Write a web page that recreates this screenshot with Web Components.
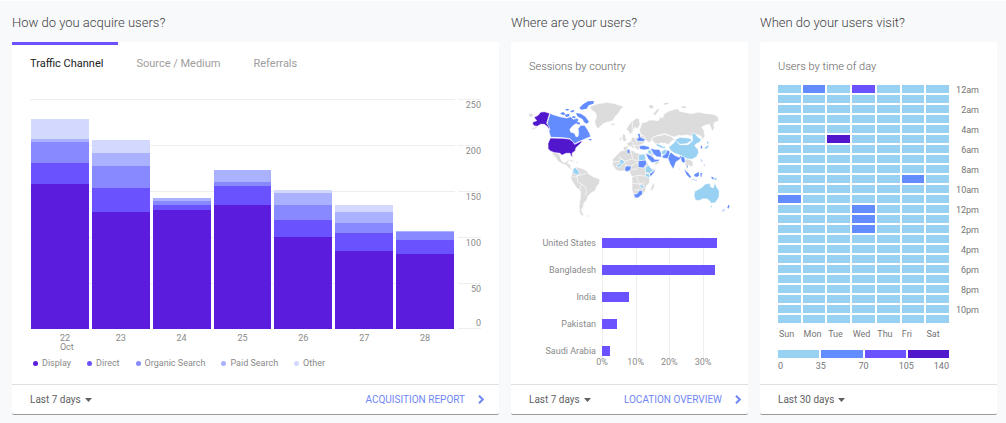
<!DOCTYPE html>
<html lang="en">
<head>
<meta charset="utf-8">
<title>Audience dashboard</title>
<style>
html { background: #f8f9fb; }
body {
  margin: 0;
  border-top: 1px solid #fff;
  font-family: Roboto, "Liberation Sans", sans-serif;
  color: #757575;
  --display: #5b1cdd;
  --direct: #6a52ff;
  --organic: #8888ff;
  --paid: #aab1ff;
  --other: #d3d8ff;
  --sky: #98d1f2;
  --blue: #638dff;
  --deep: #5117cd;
  --rule: #eeeeee;
  --link: #6f86f5;
  --text-s: 9px;
  --text-m: 10px;
  --text-l: 11px;
}
</style>
</head>
<body>
<audience-dashboard>
  <dash-panel heading="How do you acquire users?">
    <channel-tabs slot="top"></channel-tabs>
    <traffic-chart></traffic-chart>
    <panel-footer slot="footer" range="Last 7 days" report="Acquisition report"></panel-footer>
  </dash-panel>
  <dash-panel heading="Where are your users?">
    <panel-caption slot="top">Sessions by country</panel-caption>
    <country-map></country-map>
    <country-bars></country-bars>
    <panel-footer slot="footer" range="Last 7 days" report="Location overview" narrow></panel-footer>
  </dash-panel>
  <dash-panel heading="When do your users visit?">
    <panel-caption slot="top">Users by time of day</panel-caption>
    <hour-heatmap></hour-heatmap>
    <panel-footer slot="footer" range="Last 30 days"></panel-footer>
  </dash-panel>
</audience-dashboard>

<script>
class BaseElement extends HTMLElement {
  constructor() { super(); this.attachShadow({ mode: 'open' }); }
  connectedCallback() { this.shadowRoot.innerHTML = this.render(); }
}

customElements.define('audience-dashboard', class extends BaseElement {
  render() {
    return `<style>
      :host { display: grid; grid-template-columns: 487fr 237fr 237fr; gap: 12px; padding: 12px 9px 8px 12px; }
    </style><slot></slot>`;
  }
});

customElements.define('dash-panel', class extends BaseElement {
  render() {
    return `<style>
      :host { display: flex; flex-direction: column; min-width: 0; }
      h2 { margin: 0 0 9px; font-size: 13px; line-height: 20px; font-weight: 300; color: #424242; }
      article { flex: 1; display: flex; flex-direction: column; background: #fff; border-bottom: 1px solid #999; border-radius: 2px; }
      .body { flex: 1; padding: 0 18px 13px; }
    </style>
    <h2>${this.getAttribute('heading')}</h2>
    <article>
      <slot name="top"></slot>
      <div class="body"><slot></slot></div>
      <slot name="footer"></slot>
    </article>`;
  }
});

customElements.define('panel-caption', class extends BaseElement {
  render() {
    return `<style>
      :host { display: block; padding: 17px 18px 10px; font-size: var(--text-l); line-height: 16px; font-weight: 300; color: #616161; }
    </style><slot></slot>`;
  }
});

customElements.define('channel-tabs', class extends BaseElement {
  render() {
    return `<style>
      :host { display: block; }
      div { display: flex; }
      button { border: 0; border-top: 3px solid transparent; background: none; padding: 11px 15px 11px 18px; font: 400 var(--text-l)/16px Roboto, sans-serif; color: #9e9e9e; }
      button[aria-selected=true] { border-color: var(--direct); color: #212121; }
    </style>
    <div role="tablist">
      <button role="tab" aria-selected="true">Traffic Channel</button>
      <button role="tab" aria-selected="false">Source / Medium</button>
      <button role="tab" aria-selected="false">Referrals</button>
    </div>`;
  }
});

customElements.define('traffic-chart', class extends BaseElement {
  render() {
    const series = ['other', 'paid', 'organic', 'direct', 'display'];
    const days = [
      ['22<br>Oct', 21, 4, 23, 22, 158],
      ['23', 14, 14, 24, 26, 127],
      ['24', 0, 3, 4, 6, 129],
      ['25', 0, 13, 4, 21, 135],
      ['26', 3, 13, 16, 19, 100],
      ['27', 8, 12, 11, 19, 85],
      ['28', 0, 2, 8, 15, 82],
    ];
    const bars = days.map(([, ...v]) => `<div class="bar">${
      v.map((n, i) => n ? `<i style="height:${n / 2.5}%;background:var(--${series[i]})"></i>` : '').join('')}</div>`).join('');
    const legend = [['display', 'Display'], ['direct', 'Direct'], ['organic', 'Organic Search'], ['paid', 'Paid Search'], ['other', 'Other']];
    return `<style>
      :host { display: block; padding-top: 16px; font-size: var(--text-s); line-height: 10px; color: #8a8a8a; }
      .chart { display: grid; grid-template-columns: 1fr 23px; column-gap: 3px; }
      .plot, .scale { display: grid; grid-template: repeat(5, 46px) / 1fr; }
      .plot > span { border-top: 1px solid var(--rule); }
      .bars { grid-area: 1 / 1 / 6 / 2; display: grid; grid-template-columns: repeat(7, 1fr); gap: 3px; padding: 0 1px; }
      .bar { display: flex; flex-direction: column; justify-content: flex-end; }
      .scale span { border-top: 1px solid var(--rule); text-align: right; display: flex; flex-direction: column; justify-content: space-between; }
      .scale span:last-child { border-bottom: 1px solid var(--rule); }
      .scale b { font-weight: inherit; }
      .days { display: grid; grid-template-columns: repeat(7, 1fr); gap: 3px; text-align: center; padding: 5px 1px 0; line-height: 9px; }
      .days span:first-child { text-align: left; padding-left: 50%; }
      ul { list-style: none; margin: 6px 0 0; padding: 0 0 0 3px; display: flex; gap: 16px; }
      li { display: flex; align-items: center; gap: 4px; white-space: nowrap; }
      li i { width: 5px; height: 5px; border-radius: 50%; }
    </style>
    <div class="chart">
      <div class="plot">${[1, 2, 3, 4, 5].map(r => `<span style="grid-area:${r} / 1"></span>`).join('')}<div class="bars">${bars}</div></div>
      <div class="scale"><span>250</span><span>200</span><span>150</span><span>100</span><span><b>50</b><b>0</b></span></div>
      <div class="days">${days.map(d => `<span>${d[0]}</span>`).join('')}</div>
    </div>
    <ul>${legend.map(([k, t]) => `<li><i style="background:var(--${k})"></i>${t}</li>`).join('')}</ul>`;
  }
});

customElements.define('country-map', class extends BaseElement {
  render() {
    return `<style>
      :host { display: block; padding-top: 11px; }
      svg { display: block; width: 100%; }
      .g { fill: #dcdcdc; } .s { fill: var(--sky); } .b { fill: var(--blue); } .d { fill: var(--deep); }
      path { stroke: #fff; stroke-width: 2; stroke-linejoin: round; }
      .f path, .f { stroke-width: 0; }
      .l { fill: none; stroke: #fff; stroke-width: 2; }
    </style>
    <svg viewBox="27 18 603 366" role="img" aria-label="World map of sessions by country">
      <g class="g">
        <path d="M210 50L222 44 235 41 262 37 285 41 298 46 312 50 302 58 296 70 285 80 279 92 264 96 252 100 242 108 235 116 227 108 224 94 230 80 226 68 214 60Z"/>
        <path d="M24 74L34 68 40 76 34 82 27 80Z"/>
        <path d="M272 102L280 99 286 101 283 106 275 106Z"/>
        <path d="M95 187L104 189 112 190 119 194 122 206 128 216 138 217 144 209 148 212 142 220 152 224 152 234 160 238 156 240 146 234 140 226 128 222 114 214 108 204 102 196 98 192 104 206 101 203Z"/>
        <path d="M160 238L172 231 186 236 200 242 207 253 222 261 240 268 238 280 230 290 226 302 214 308 204 318 200 330 192 338 190 350 184 358 188 370 192 374 186 378 179 368 177 350 181 322 182 304 168 292 156 272 152 262 156 250Z"/>
        <path d="M306 138L311 130 316 136 318 146 322 152 312 155 308 150Z"/>
        <path d="M299 142L305 142 305 151 299 151Z"/>
        <path d="M319 118L324 108 336 94 350 84 358 88 360 104 352 116 344 112 338 126 330 134 326 124Z"/>
        <path d="M310 170L324 168 320 160 332 154 336 140 344 144 368 136 378 140 374 158 360 166 358 178 350 180 344 170 338 164 344 176 336 174 332 168 324 170 322 182 310 183Z"/>
        <path d="M358 120L364 104 366 98 381 95 385 91 399 90 415 92 421 80 428 84 432 72 445 64 463 58 475 56 478 63 500 68 515 71 535 66 560 71 577 72 593 78 597 93 584 97 581 105 584 112 577 124 572 112 568 103 556 106 545 112 552 121 555 138 547 150 543 139 529 133 515 139 501 135 485 137 475 136 463 142 455 139 435 131 407 138 397 144 394 152 388 158 376 150 374 140 362 133Z"/>
        <path d="M394 147L407 139 435 133 455 140 464 148 452 156 446 164 436 160 420 159 412 166 402 158Z"/>
        <path d="M290 196L302 183 324 179 340 182 346 188 372 192 378 208 386 224 394 236 406 236 402 248 390 262 388 278 378 290 376 304 366 314 354 324 344 322 336 300 336 280 336 262 328 244 314 242 300 244 288 240 278 226 278 208Z"/>
        <path d="M396 284L404 278 402 292 396 304 392 298Z"/>
        <path d="M385 180L396 176 410 184 418 192 400 194 396 206 378 200Z"/>
        <path d="M404 216L418 212 418 220 406 226Z"/>
        <path d="M494 208L504 206 518 214 520 226 512 232 506 224 502 236 508 244 502 242 496 226Z"/>
      </g>
      <g class="g f">
        <path d="M430 40L445 38 446 42 432 44ZM386 48L394 44 402 52 392 56ZM400 72L412 58 418 58 406 76ZM482 50L494 48 500 54 488 54ZM36 116L50 110 52 112 38 119ZM150 209L164 214 158 215 150 212ZM168 215L176 217 170 219ZM200 378L206 376 206 380ZM478 234L480 238 477 240Z"/>
      </g>
      <path class="b" d="M80 106L90 70 100 74 120 80 140 84 152 80 160 88 172 84 176 90 170 100 158 108 150 118 152 126 164 130 168 140 174 139 176 128 174 116 182 106 194 106 202 118 209 130 212 140 202 144 188 150 174 156 164 162 150 146 128 143 92 142 88 128 86 116Z"/>
      <g class="b f">
        <path d="M120 70L130 66 136 72 130 76ZM134 74L148 71 148 79 138 81ZM138 56L148 58 144 62 136 60ZM152 62L164 60 160 67 152 67ZM168 69L182 71 196 80 207 95 200 101 192 96 188 88 172 79ZM178 54L190 42 204 34 222 33 220 41 206 46 200 56 184 59ZM158 78L168 80 164 85 156 83ZM168 96L178 97 181 103 171 103ZM204 148L214 146 214 152Z"/>
        <path d="M322 180L328 178 328 190 323 188ZM502 224L504 232 502 234ZM542 168L546 167 547 175 543 176ZM493 238L504 248 513 260 511 265 500 254ZM523 253L530 250 536 245 537 256 532 261 523 259ZM541 249L548 250 545 253 545 260 542 260ZM573 260L580 262 581 270 575 265ZM625 344L629 348 625 356 622 353ZM617 356L609 363 605 365 609 360Z"/>
        <path opacity=".5" d="M541 206L545 209 548 218 543 213ZM552 222L556 227 551 227ZM515 267L532 270 530 272 515 269Z"/>
      </g>
      <path class="d" d="M38 96L50 92 42 82 54 76 62 66 74 65 89 70 80 100 86 108 90 120 80 108 72 103 62 103 52 109 44 108 38 103Z"/>
      <path class="d" d="M91 144L128 145 148 147 158 154 164 163 182 154 188 154 176 166 168 173 166 182 156 190 158 202 153 198 150 190 138 190 126 196 120 190 104 188 92 184 84 176 84 160Z"/>
      <path class="s" d="M159 236L168 232 172 240 178 244 176 256 168 254 158 248Z"/>
      <path class="s" d="M299 206L308 210 316 216 306 222 300 232 290 230 291 224 300 222Z"/>
      <path class="b" d="M315 232L320 228 334 228 332 240 322 245 314 242Z"/>
      <path class="s" d="M356 194L374 192 378 208 372 212 356 212Z"/>
      <path class="b" d="M355 212L378 210 380 222 370 234 354 232Z"/>
      <path class="s" d="M376 232L386 226 400 242 388 250 376 246Z"/>
      <path class="s" d="M376 250L390 252 388 264 376 258Z"/>
      <path class="b" d="M388 252L400 244 406 237 404 246 392 260Z"/>
      <path class="s" d="M360 284L372 286 368 296 360 292Z"/>
      <path class="b" d="M341 312L350 312 358 302 366 300 368 312 354 324 344 323Z"/>
      <path class="b" d="M357 168L370 166 388 170 388 178 372 180 360 178Z"/>
      <path class="b" d="M352 132L360 130 362 142 376 148 372 154 352 154 350 148 356 142Z"/>
      <path class="s" d="M382 184L392 178 396 190 388 194Z"/>
      <path class="b" d="M391 174L404 178 418 178 424 190 424 202 410 200 400 192Z"/>
      <path class="b" d="M376 190L388 194 400 202 404 208 420 208 416 214 396 218 384 206Z"/>
      <path class="s" d="M408 160L420 164 430 170 438 168 434 176 424 174 410 168Z"/>
      <path class="s" d="M424 184L436 178 446 182 436 194 426 194Z"/>
      <path class="b" d="M426 198L436 192 442 180 450 184 448 198 442 206 428 204Z"/>
      <path class="b" d="M446 198L452 186 464 196 478 202 482 196 488 200 480 208 468 216 460 238 450 222 444 206Z"/>
      <path class="b" d="M482 204L489 194 494 202 496 214 492 220 484 214Z"/>
      <path class="s" d="M446 172L462 158 466 150 480 164 504 164 518 152 516 130 524 130 534 142 544 148 540 156 528 162 524 168 534 178 536 188 530 200 516 208 500 206 486 198 464 190 452 182Z"/>
      <path class="s" d="M464 150L480 142 506 144 518 150 500 161 480 163Z"/>
      <path class="s" d="M524 304L536 298 546 292 556 282 570 280 572 290 580 294 584 278 590 290 598 304 597 322 586 338 574 340 564 328 550 326 536 332 526 330 522 318Z"/>
      <g class="s f">
        <path d="M572 349L576 348 575 352 572 352ZM560 160L564 152 566 158 562 162ZM553 174L560 169 565 164 565 173 556 177ZM583 262L591 266 589 270 584 270Z"/>
      </g>
      <path class="l" d="M152 256L164 262 176 256 200 250M172 256L172 274 184 282 196 290 200 304 196 316M184 282L180 300M296 200L316 214 332 208 352 212M332 182L338 206M280 216L296 214M316 222L318 228M334 228L352 216M334 240L352 236M336 260L356 256 374 258M338 280L356 282 374 278M350 260L358 284M344 300L358 298M334 154L346 166 362 166M346 146L350 160M338 94L336 122"/>
    </svg>`;
  }
});

customElements.define('country-bars', class extends BaseElement {
  render() {
    const max = 38;
    const rows = [['United States', 34], ['Bangladesh', 33.5], ['India', 8], ['Pakistan', 4.5], ['Saudi Arabia', 2.5]];
    const ticks = [0, 10, 20, 30];
    return `<style>
      :host { display: grid; grid-template-columns: 67px 1fr; column-gap: 6px; padding-top: 11px; font-size: var(--text-s); line-height: 10px; color: #8a8a8a; }
      .names, .plot { display: grid; grid-auto-rows: 27px; align-items: center; }
      .names { text-align: right; }
      .plot { position: relative; }
      .plot i { position: relative; height: 10px; background: var(--direct); }
      .tick { position: absolute; top: 8px; bottom: 6px; width: 1px; background: var(--rule); }
      .axis { grid-column: 2; display: flex; height: 0; }
      .axis span { flex: none; width: ${1000 / max}%; }
      .axis b { display: block; width: 20px; margin: -7px 0 0 -10px; text-align: center; font-weight: 400; }
    </style>
    <div class="names">${rows.map(r => `<span>${r[0]}</span>`).join('')}</div>
    <div class="plot">
      ${ticks.map(t => `<span class="tick" style="left:${t / max * 100}%"></span>`).join('')}
      ${rows.map(r => `<i style="width:${r[1] / max * 100}%"></i>`).join('')}
    </div>
    <div class="axis">${ticks.map(t => `<span><b>${t}%</b></span>`).join('')}</div>`;
  }
});

customElements.define('hour-heatmap', class extends BaseElement {
  render() {
    const days = ['Sun', 'Mon', 'Tue', 'Wed', 'Thu', 'Fri', 'Sat'];
    const hot = { '0-1': 'blue', '0-3': 'direct', '5-2': 'deep', '9-5': 'blue', '11-0': 'blue', '12-3': 'blue', '13-3': 'blue', '14-3': 'blue' };
    let cells = '';
    for (let h = 0; h < 24; h++) for (let d = 0; d < 7; d++) cells += `<i style="background:var(--${hot[h + '-' + d] || 'sky'})"></i>`;
    const hours = Array.from({ length: 12 }, (_, i) => `${(i * 2) % 12 || 12}${i < 6 ? 'am' : 'pm'}`);
    return `<style>
      :host { display: grid; grid-template-columns: 1fr 24px; column-gap: 6px; font-size: var(--text-s); line-height: 10px; color: #757575; }
      .cells { display: grid; grid-template-columns: repeat(7, 1fr); grid-auto-rows: 8px; gap: 2px; }
      .hours { display: grid; grid-auto-rows: 20px; text-align: right; }
      .days { display: grid; grid-template-columns: repeat(7, 1fr); gap: 2px; padding: 4px 0 0 1px; }
      .key { grid-column: 1; display: grid; grid-template-columns: repeat(4, 1fr); grid-auto-rows: 8px; gap: 2px; margin-top: 11px; }
      .nums { grid-column: 1; display: grid; grid-template-columns: 1fr 2fr 2fr 2fr 1fr; text-align: center; padding-top: 3px; }
      .nums span:first-child { text-align: left; }
      .nums span:last-child { text-align: right; }
    </style>
    <div class="cells" role="img" aria-label="Users by day and hour">${cells}</div>
    <div class="hours">${hours.map(h => `<span>${h}</span>`).join('')}</div>
    <div class="days">${days.map(d => `<span>${d}</span>`).join('')}</div>
    <div class="key">${['sky', 'blue', 'direct', 'deep'].map(c => `<i style="background:var(--${c})"></i>`).join('')}</div>
    <div class="nums">${[0, 35, 70, 105, 140].map(n => `<span>${n}</span>`).join('')}</div>`;
  }
});

customElements.define('panel-footer', class extends BaseElement {
  render() {
    const range = this.getAttribute('range'), report = this.getAttribute('report');
    return `<style>
      :host { display: flex; justify-content: space-between; align-items: center; border-top: 1px solid #e0e0e0; padding: 0 15px 0 18px; height: 29px; font-size: var(--text-m); line-height: 14px; }
      :host([narrow]) { padding-right: 7px; }
      label { display: flex; align-items: center; gap: 4px; }
      select { appearance: none; field-sizing: content; border: 0; padding: 0; margin: 0; background: none; font: inherit; color: #616161; }
      .caret { width: 7px; height: 4px; fill: #616161; }
      a { display: flex; align-items: center; gap: 13px; color: var(--link); text-decoration: none; text-transform: uppercase; white-space: nowrap; }
      .chev { width: 6px; height: 9px; fill: none; stroke: var(--link); stroke-width: 2; }
    </style>
    <label><select aria-label="Date range"><option>${range}</option></select><svg class="caret" viewBox="0 0 7 4"><path d="M0 0h7L3.5 4z"/></svg></label>
    ${report ? `<a href="#report">${report}<svg class="chev" viewBox="0 0 6 9"><path d="M1 .7L4.8 4.5 1 8.3"/></svg></a>` : ''}`;
  }
});
</script>
</body>
</html>
